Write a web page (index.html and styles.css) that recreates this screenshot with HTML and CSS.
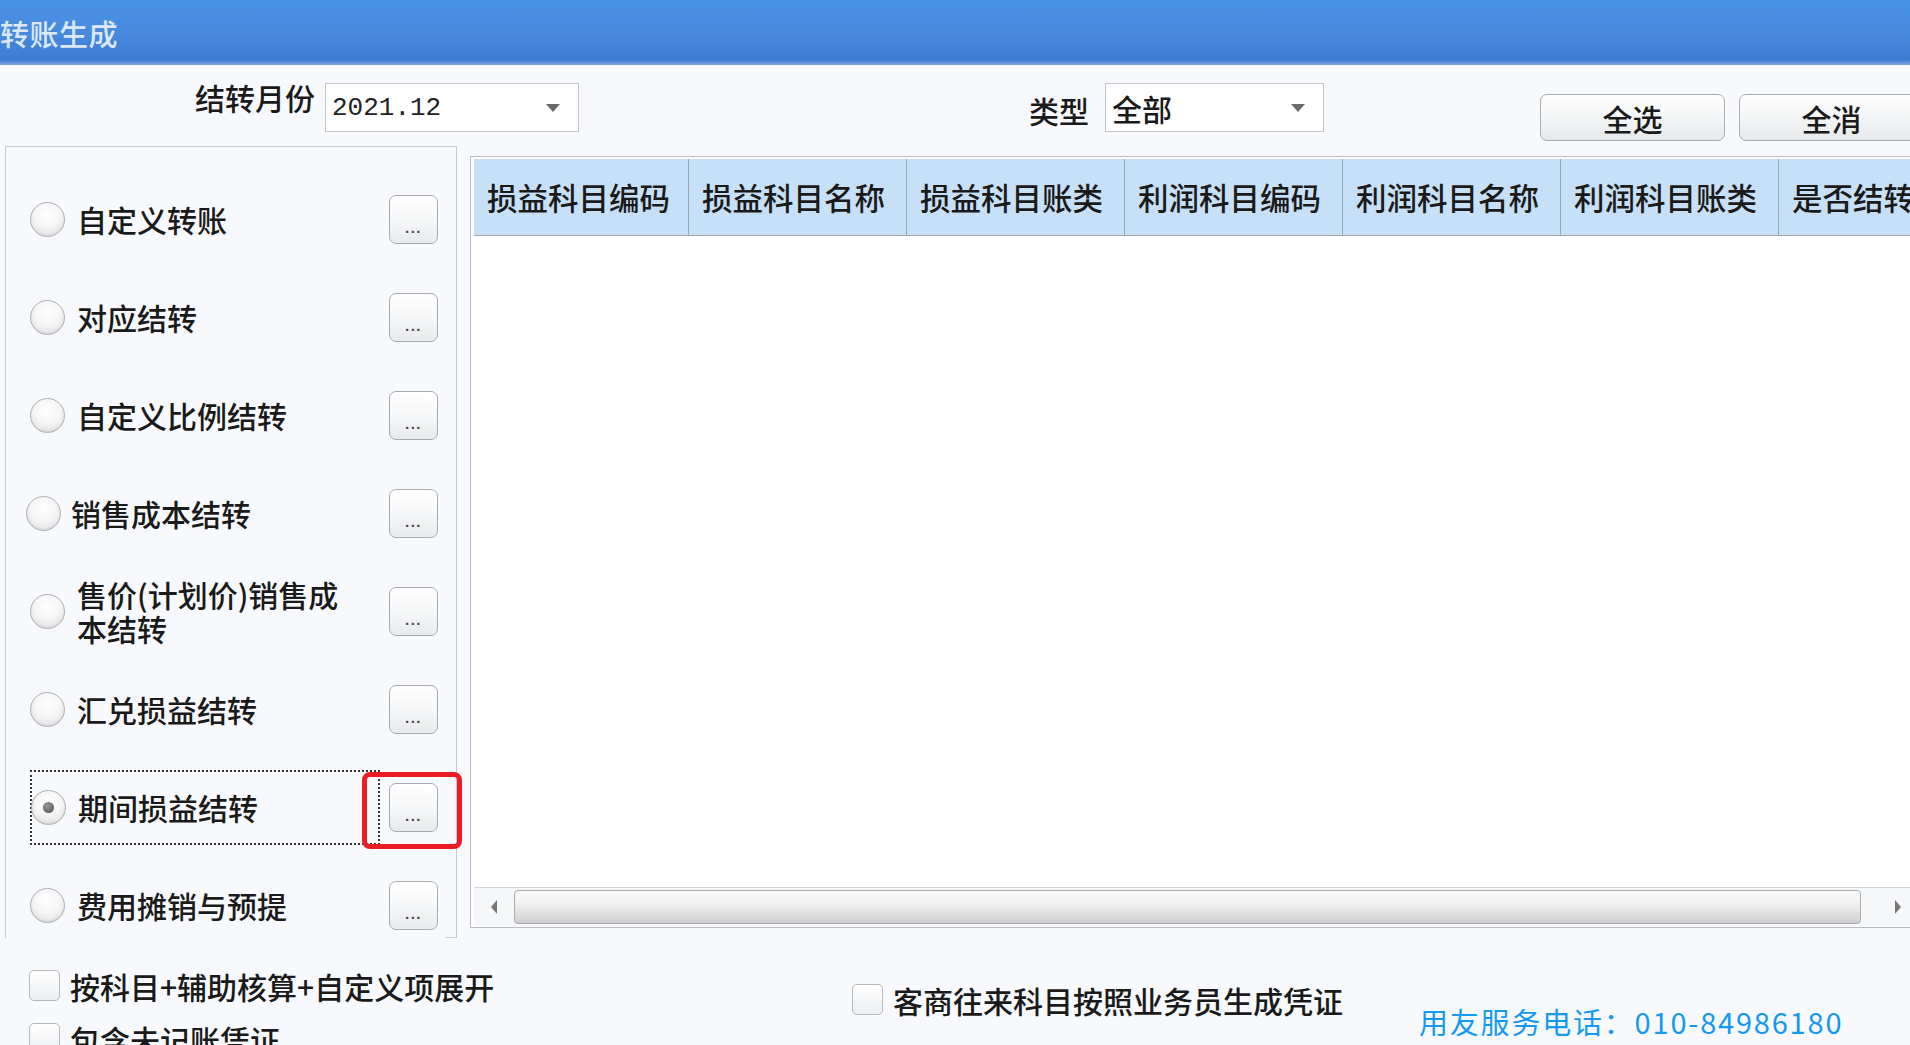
FILE: index.html
```html
<!DOCTYPE html>
<html lang="zh-CN">
<head>
<meta charset="utf-8">
<title>转账生成</title>
<link rel="stylesheet" href="styles.css">
</head>
<body>
<div class="window">
  <div class="titlebar"><span class="title">转账生成</span></div>

  <div class="toolbar">
    <span class="lbl lbl-month">结转月份</span>
    <div class="combo combo-month"><span class="combo-text mono">2021.12</span><span class="caret"></span></div>
    <span class="lbl lbl-type">类型</span>
    <div class="combo combo-type"><span class="combo-text">全部</span><span class="caret"></span></div>
    <button class="btn btn-all">全选</button>
    <button class="btn btn-none">全消</button>
  </div>

  <div class="main">
    <div class="panel">
      <div class="row"><span class="radio"></span><span class="rlabel">自定义转账</span><span class="dots">...</span></div>
      <div class="row"><span class="radio"></span><span class="rlabel">对应结转</span><span class="dots">...</span></div>
      <div class="row"><span class="radio"></span><span class="rlabel">自定义比例结转</span><span class="dots">...</span></div>
      <div class="row row-shift"><span class="radio"></span><span class="rlabel">销售成本结转</span><span class="dots">...</span></div>
      <div class="row"><span class="radio"></span><span class="rlabel multi">售价(计划价)销售成本结转</span><span class="dots">...</span></div>
      <div class="row"><span class="radio"></span><span class="rlabel">汇兑损益结转</span><span class="dots">...</span></div>
      <div class="row row-sel"><div class="focus"><span class="radio checked"></span><span class="rlabel">期间损益结转</span></div><span class="dots">...</span><span class="mark"></span></div>
      <div class="row row-last"><span class="radio"></span><span class="rlabel">费用摊销与预提</span><span class="dots">...</span></div>
    </div>

    <div class="grid">
      <div class="ghead">
        <div class="gcell c1">损益科目编码</div>
        <div class="gcell">损益科目名称</div>
        <div class="gcell">损益科目账类</div>
        <div class="gcell">利润科目编码</div>
        <div class="gcell">利润科目名称</div>
        <div class="gcell">利润科目账类</div>
        <div class="gcell">是否结转</div>
      </div>
      <div class="gbody"></div>
      <div class="hscroll">
        <span class="sarrow"><span class="tri-left"></span></span>
        <span class="thumb"></span>
        <span class="sarrow sarrow-r"><span class="tri-right"></span></span>
      </div>
    </div>
  </div>

  <div class="bottom">
    <div class="bcol">
      <label class="chk"><span class="box"></span>按科目+辅助核算+自定义项展开</label>
      <label class="chk"><span class="box"></span>包含未记账凭证</label>
    </div>
    <label class="chk chk-right"><span class="box"></span>客商往来科目按照业务员生成凭证</label>
  </div>

  <div class="watermark">用友服务电话：010-84986180</div>
</div>
</body>
</html>
```

FILE: styles.css
```css
* { box-sizing: border-box; }
html, body {
  margin: 0;
  padding: 0;
  width: 1910px;
  height: 1045px;
  overflow: hidden;
  background: #f7f9fc;
  font-family: "Noto Sans CJK SC", "Noto Sans", sans-serif;
  font-weight: 500;
  color: #1a1a1a;
}
.window {
  position: relative;
  width: 1910px;
  height: 1045px;
  overflow: hidden;
}

/* title bar */
.titlebar {
  height: 65px;
  background: linear-gradient(to bottom, #4a93e6 0%, #4689dd 55%, #3d7ad2 92%, #7fa9de 100%);
  display: flex;
  align-items: center;
}
.title {
  margin-left: 0;
  font-size: 29px;
  color: rgba(240, 246, 253, 0.9);
  letter-spacing: 0.5px;
}

/* toolbar */
.toolbar {
  height: 81px;
  display: flex;
  align-items: flex-start;
  padding-left: 195px;
}
.toolbar > * { flex: none; }
.lbl {
  font-size: 30px;
  line-height: 40px;
  white-space: nowrap;
}
.lbl-month { width: 118px; margin-top: 12px; }
.lbl-type { width: 60px; margin-top: 25px; margin-left: 450px; }
.combo {
  height: 49px;
  margin-top: 18px;
  background: #fff;
  border: 1px solid #c3c7cc;
  display: flex;
  align-items: center;
  justify-content: space-between;
  padding: 0 18px 0 6px;
}
.combo-month { width: 254px; margin-left: 12px; }
.combo-type { width: 219px; margin-left: 16px; }
.combo-text { font-size: 30px; line-height: 1; }
.combo-text.mono {
  font-family: "Liberation Mono", "DejaVu Sans Mono", monospace;
  font-weight: 400;
  font-size: 26px;
  color: #222;
}
.caret {
  width: 0; height: 0;
  border-left: 7px solid transparent;
  border-right: 7px solid transparent;
  border-top: 8px solid #6a6a6a;
}
.btn {
  width: 185px;
  height: 47px;
  margin-top: 29px;
  border: 1.5px solid #a9adb2;
  border-radius: 7px;
  background: linear-gradient(to bottom, #ffffff 0%, #f4f5f6 50%, #e6e8ea 100%);
  font-family: inherit;
  font-weight: 500;
  font-size: 30px;
  color: #1a1a1a;
  padding: 0;
  line-height: 1;
}
.btn-all { margin-left: 216px; }
.btn-none { margin-left: 14px; }

/* main */
.main {
  display: flex;
  align-items: flex-start;
  padding-left: 5px;
  height: 792px;
}
.main > * { flex: none; }
.panel {
  width: 452px;
  height: 792px;
  border: 1.5px solid #c6cad0;
  padding-top: 23px;
  display: flex;
  flex-direction: column;
}
.row {
  position: relative;
  height: 98px;
  flex: none;
  display: flex;
  align-items: center;
  padding-left: 24px;
  margin-right: 10px;
  background: #f7f9fc;
}
.row-shift { padding-left: 20px; }
.row-shift .rlabel { margin-left: 10px; }
.radio {
  width: 35px;
  height: 35px;
  flex: none;
  border-radius: 50%;
  border: 1.5px solid #aeb1b5;
  background: radial-gradient(circle at 50% 35%, #ffffff 0%, #f6f6f6 45%, #dadada 100%);
  box-shadow: inset 0 -1px 2px rgba(0,0,0,0.08);
  display: flex;
  align-items: center;
  justify-content: center;
}
.radio.checked::after {
  content: "";
  width: 11px;
  height: 11px;
  border-radius: 50%;
  background: radial-gradient(circle at 40% 35%, #9a9a9a, #4a4a4a);
}
.rlabel {
  margin-left: 12px;
  font-size: 30px;
  line-height: 34px;
  white-space: nowrap;
}
.rlabel.multi {
  white-space: normal;
  width: 272px;
  word-break: break-all;
}
.dots {
  margin-left: auto;
  margin-right: 8px;
  width: 49px;
  height: 49px;
  flex: none;
  border: 1.5px solid #a8abb0;
  border-radius: 7px;
  background: linear-gradient(to bottom, #ffffff 0%, #f5f6f7 55%, #e8e9eb 100%);
  font-family: "Liberation Sans", sans-serif;
  font-weight: 700;
  font-size: 15px;
  letter-spacing: 1.5px;
  color: #4a4a4a;
  display: flex;
  justify-content: center;
  align-items: flex-end;
  padding-bottom: 8px;
  line-height: 1;
}
.row-sel { padding-left: 0; }
.focus {
  width: 350px;
  height: 75px;
  margin-left: 24px;
  border: 2px dotted #333;
  display: flex;
  align-items: center;
}
.focus .radio { margin-left: -1px; }
.mark {
  position: absolute;
  left: 356px;
  top: 14px;
  width: 100px;
  height: 77px;
  border: 5px solid #ec1c24;
  border-radius: 8px;
}

/* grid */
.grid {
  margin-left: 13px;
  margin-top: 10px;
  width: 1460px;
  height: 772px;
  border: 1.5px solid #b9bdc3;
  background: #ffffff;
  padding: 2px 3px 1px 3px;
  display: flex;
  flex-direction: column;
}
.ghead {
  display: flex;
  height: 77px;
  flex: none;
  border-bottom: 1.5px solid #9fa6ae;
}
.gcell {
  width: 218px;
  flex: none;
  background: #c6e0f7;
  border-right: 1.5px solid #9aa7b5;
  display: flex;
  align-items: center;
  padding-left: 13px;
  font-size: 30.5px;
  white-space: nowrap;
  overflow: hidden;
  color: #1a1a1a;
}
.gcell.c1 { width: 215px; }
.gbody { flex: 1; background: #fff; }
.hscroll {
  height: 39px;
  flex: none;
  display: flex;
  align-items: center;
  background: #f6f7f8;
  border-top: 1px solid #d4d7da;
}
.sarrow {
  width: 40px;
  height: 100%;
  flex: none;
  display: flex;
  align-items: center;
  justify-content: center;
}
.sarrow-r {
  justify-content: flex-start;
  padding-left: 34px;
}
.tri-left {
  width: 0; height: 0;
  border-top: 7px solid transparent;
  border-bottom: 7px solid transparent;
  border-right: 6px solid #777;
}
.tri-right {
  width: 0; height: 0;
  border-top: 7px solid transparent;
  border-bottom: 7px solid transparent;
  border-left: 6px solid #777;
}
.thumb {
  width: 1347px;
  height: 34px;
  flex: none;
  border: 1.5px solid #a9acb0;
  border-radius: 4px;
  background: linear-gradient(to bottom, #fbfbfb 0%, #eeeeee 45%, #dadada 80%, #cfcfcf 100%);
}

/* bottom */
.bottom {
  display: flex;
  align-items: flex-start;
  padding-left: 29px;
}
.bottom > * { flex: none; }
.bcol {
  width: 823px;
  padding-top: 32px;
  display: flex;
  flex-direction: column;
  gap: 22px;
}
.chk {
  display: flex;
  align-items: center;
  gap: 10px;
  font-size: 30px;
  line-height: 30px;
  white-space: nowrap;
}
.box {
  width: 31px;
  height: 31px;
  flex: none;
  border: 1.5px solid #b5b8bc;
  border-radius: 5px;
  background: linear-gradient(to bottom, #ffffff, #eceef0);
}
.chk-right { margin-top: 46px; }

.watermark {
  position: absolute;
  left: 1419px;
  top: 1003px;
  font-size: 29px;
  font-weight: 400;
  line-height: 36px;
  color: #1499f2;
  letter-spacing: 1.8px;
  white-space: nowrap;
}
```
